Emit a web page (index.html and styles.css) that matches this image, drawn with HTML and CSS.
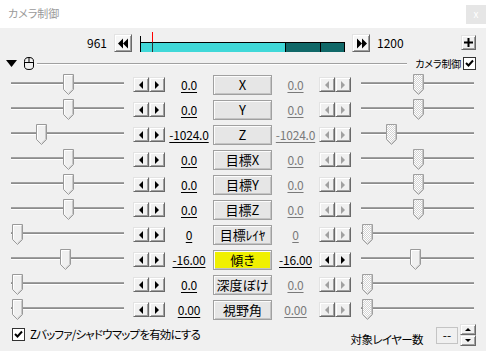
FILE: index.html
```html
<!DOCTYPE html>
<html>
<head>
    <title>カメラ制御</title>
    <meta charset="utf-8">
    <link rel="stylesheet" href="styles.css">
</head>
<body>
    <svg class="defs" width="0" height="0">
        <defs>
            <pattern id="dither" width="2" height="2" patternUnits="userSpaceOnUse">
                <rect width="2" height="2" fill="#fff"/>
                <rect width="1" height="1" fill="#d4d4d4"/>
                <rect x="1" y="1" width="1" height="1" fill="#d4d4d4"/>
            </pattern>
            <symbol id="thumb-on" viewBox="0 0 11 21">
                <path d="M0.5 0.5H10.5V15.5L5.5 20.5L0.5 15.5Z" fill="#f0f0f0" stroke="#9a9a9a"/>
                <path d="M1.5 15V1.5H9.5" fill="none" stroke="#fff"/>
                <path d="M9.5 1.5V15.2L5.5 19.2" fill="none" stroke="#c8c8c8"/>
            </symbol>
            <symbol id="thumb-off" viewBox="0 0 11 21">
                <path d="M0.5 0.5H10.5V15.5L5.5 20.5L0.5 15.5Z" fill="url(#dither)" stroke="#a0a0a0"/>
                <path d="M9.5 1.5V15.2L5.5 19.2" fill="none" stroke="#c8c8c8"/>
            </symbol>
        </defs>
    </svg>

    <div class="titlebar">
        <span class="title">カメラ制御</span>
        <span class="close">x</span>
    </div>

    <div class="toolbar">
        <span class="frame">961</span>
        <span class="nav"><svg width="11" height="11" viewBox="0 0 11 11"><path d="M0 5.5L5 0.5V10.5Z M5 5.5L10 0.5V10.5Z" fill="#000"/></svg></span>
        <div class="timeline">
            <div class="tl-bar">
                <div class="tl-done"></div>
                <div class="tl-seg"></div>
                <div class="tl-seg last"></div>
            </div>
            <div class="tl-cursor"></div>
        </div>
        <span class="nav"><svg width="11" height="11" viewBox="0 0 11 11"><path d="M1 0.5L6 5.5L1 10.5Z M6 0.5L11 5.5L6 10.5Z" fill="#000"/></svg></span>
        <span class="frame-end">1200</span>
        <span class="plus"><svg width="9" height="9" viewBox="0 0 9 9"><path d="M3.5 0H5.5V9H3.5Z M0 3.5H9V5.5H0Z" fill="#000"/></svg></span>
    </div>

    <div class="subbar">
        <svg class="fold" width="11" height="7" viewBox="0 0 11 7"><path d="M0 0H11L5.5 7Z" fill="#000"/></svg>
        <svg class="mouse" width="10" height="13" viewBox="0 0 10 13"><path d="M0.5 4.5C0.5 1.5 2 0.5 5 0.5C8 0.5 9.5 1.5 9.5 4.5V9C9.5 11.5 8 12.5 5 12.5C2 12.5 0.5 11.5 0.5 9Z M0.5 5.5H9.5 M5 0.5V5.5" fill="none" stroke="#000"/></svg>
        <div class="rule"></div>
        <span class="sub-label">カメラ制御</span>
        <span class="check"><svg width="11" height="11" viewBox="0 0 11 11"><path d="M2 5L4.5 7.5L9 2.5" fill="none" stroke="#000" stroke-width="2"/></svg></span>
    </div>

    <div class="rows">
        <div class="row">
            <div class="slider"><div class="track"></div><svg class="thumb" style="left:52px" width="11" height="21"><use href="#thumb-on"/></svg></div>
            <div class="spin"><span class="sb"><i class="tri-l"></i></span><span class="sb"><i class="tri-r"></i></span></div>
            <span class="val">0.0</span>
            <button class="param">X</button>
            <span class="val right off">0.0</span>
            <div class="spin off"><span class="sb"><i class="tri-l"></i></span><span class="sb"><i class="tri-r"></i></span></div>
            <div class="slider right"><div class="track"></div><svg class="thumb" style="left:52px" width="11" height="21"><use href="#thumb-off"/></svg></div>
        </div>
        <div class="row">
            <div class="slider"><div class="track"></div><svg class="thumb" style="left:52px" width="11" height="21"><use href="#thumb-on"/></svg></div>
            <div class="spin"><span class="sb"><i class="tri-l"></i></span><span class="sb"><i class="tri-r"></i></span></div>
            <span class="val">0.0</span>
            <button class="param">Y</button>
            <span class="val right off">0.0</span>
            <div class="spin off"><span class="sb"><i class="tri-l"></i></span><span class="sb"><i class="tri-r"></i></span></div>
            <div class="slider right"><div class="track"></div><svg class="thumb" style="left:52px" width="11" height="21"><use href="#thumb-off"/></svg></div>
        </div>
        <div class="row">
            <div class="slider"><div class="track"></div><svg class="thumb" style="left:25px" width="11" height="21"><use href="#thumb-on"/></svg></div>
            <div class="spin"><span class="sb"><i class="tri-l"></i></span><span class="sb"><i class="tri-r"></i></span></div>
            <span class="val">-1024.0</span>
            <button class="param">Z</button>
            <span class="val right off">-1024.0</span>
            <div class="spin off"><span class="sb"><i class="tri-l"></i></span><span class="sb"><i class="tri-r"></i></span></div>
            <div class="slider right"><div class="track"></div><svg class="thumb" style="left:25px" width="11" height="21"><use href="#thumb-off"/></svg></div>
        </div>
        <div class="row">
            <div class="slider"><div class="track"></div><svg class="thumb" style="left:52px" width="11" height="21"><use href="#thumb-on"/></svg></div>
            <div class="spin"><span class="sb"><i class="tri-l"></i></span><span class="sb"><i class="tri-r"></i></span></div>
            <span class="val">0.0</span>
            <button class="param">目標X</button>
            <span class="val right off">0.0</span>
            <div class="spin off"><span class="sb"><i class="tri-l"></i></span><span class="sb"><i class="tri-r"></i></span></div>
            <div class="slider right"><div class="track"></div><svg class="thumb" style="left:52px" width="11" height="21"><use href="#thumb-off"/></svg></div>
        </div>
        <div class="row">
            <div class="slider"><div class="track"></div><svg class="thumb" style="left:52px" width="11" height="21"><use href="#thumb-on"/></svg></div>
            <div class="spin"><span class="sb"><i class="tri-l"></i></span><span class="sb"><i class="tri-r"></i></span></div>
            <span class="val">0.0</span>
            <button class="param">目標Y</button>
            <span class="val right off">0.0</span>
            <div class="spin off"><span class="sb"><i class="tri-l"></i></span><span class="sb"><i class="tri-r"></i></span></div>
            <div class="slider right"><div class="track"></div><svg class="thumb" style="left:52px" width="11" height="21"><use href="#thumb-off"/></svg></div>
        </div>
        <div class="row">
            <div class="slider"><div class="track"></div><svg class="thumb" style="left:52px" width="11" height="21"><use href="#thumb-on"/></svg></div>
            <div class="spin"><span class="sb"><i class="tri-l"></i></span><span class="sb"><i class="tri-r"></i></span></div>
            <span class="val">0.0</span>
            <button class="param">目標Z</button>
            <span class="val right off">0.0</span>
            <div class="spin off"><span class="sb"><i class="tri-l"></i></span><span class="sb"><i class="tri-r"></i></span></div>
            <div class="slider right"><div class="track"></div><svg class="thumb" style="left:52px" width="11" height="21"><use href="#thumb-off"/></svg></div>
        </div>
        <div class="row">
            <div class="slider"><div class="track"></div><svg class="thumb" style="left:1px" width="11" height="21"><use href="#thumb-on"/></svg></div>
            <div class="spin"><span class="sb"><i class="tri-l"></i></span><span class="sb"><i class="tri-r"></i></span></div>
            <span class="val">0</span>
            <button class="param">目標ﾚｲﾔ</button>
            <span class="val right off">0</span>
            <div class="spin off"><span class="sb"><i class="tri-l"></i></span><span class="sb"><i class="tri-r"></i></span></div>
            <div class="slider right"><div class="track"></div><svg class="thumb" style="left:1px" width="11" height="21"><use href="#thumb-off"/></svg></div>
        </div>
        <div class="row">
            <div class="slider"><div class="track"></div><svg class="thumb" style="left:49px" width="11" height="21"><use href="#thumb-on"/></svg></div>
            <div class="spin"><span class="sb"><i class="tri-l"></i></span><span class="sb"><i class="tri-r"></i></span></div>
            <span class="val">-16.00</span>
            <button class="param hot">傾き</button>
            <span class="val right">-16.00</span>
            <div class="spin"><span class="sb"><i class="tri-l"></i></span><span class="sb"><i class="tri-r"></i></span></div>
            <div class="slider right"><div class="track"></div><svg class="thumb" style="left:49px" width="11" height="21"><use href="#thumb-on"/></svg></div>
        </div>
        <div class="row">
            <div class="slider"><div class="track"></div><svg class="thumb" style="left:1px" width="11" height="21"><use href="#thumb-on"/></svg></div>
            <div class="spin"><span class="sb"><i class="tri-l"></i></span><span class="sb"><i class="tri-r"></i></span></div>
            <span class="val">0.0</span>
            <button class="param">深度ぼけ</button>
            <span class="val right off">0.0</span>
            <div class="spin off"><span class="sb"><i class="tri-l"></i></span><span class="sb"><i class="tri-r"></i></span></div>
            <div class="slider right"><div class="track"></div><svg class="thumb" style="left:1px" width="11" height="21"><use href="#thumb-off"/></svg></div>
        </div>
        <div class="row">
            <div class="slider"><div class="track"></div><svg class="thumb" style="left:1px" width="11" height="21"><use href="#thumb-on"/></svg></div>
            <div class="spin"><span class="sb"><i class="tri-l"></i></span><span class="sb"><i class="tri-r"></i></span></div>
            <span class="val">0.00</span>
            <button class="param">視野角</button>
            <span class="val right off">0.00</span>
            <div class="spin off"><span class="sb"><i class="tri-l"></i></span><span class="sb"><i class="tri-r"></i></span></div>
            <div class="slider right"><div class="track"></div><svg class="thumb" style="left:1px" width="11" height="21"><use href="#thumb-off"/></svg></div>
        </div>
    </div>

    <div class="footer">
        <div class="zbuf">
            <span class="check"><svg width="11" height="11" viewBox="0 0 11 11"><path d="M2 5L4.5 7.5L9 2.5" fill="none" stroke="#000" stroke-width="2"/></svg></span>
            <span class="zbuf-label">Zバッファ/シャドウマップを有効にする</span>
        </div>
        <div class="layers">
            <span class="layers-label">対象レイヤー数</span>
            <span class="layers-box">--</span>
            <div class="updown">
                <span class="ud"><i class="tri-u"></i></span>
                <span class="ud"><i class="tri-d"></i></span>
            </div>
        </div>
    </div>
</body>
</html>
```

FILE: styles.css
```css
body {
    margin: 0;
    width: 486px;
    height: 351px;
    overflow: hidden;
    background: #f0f0f0;
    color: #000;
    font-family: "Noto Sans CJK JP", sans-serif;
    font-size: 12px;
    font-feature-settings: "palt";
}
.defs {
    position: absolute;
}
.titlebar {
    height: 28px;
    background: white;
    display: flex;
    align-items: flex-start;
}
.title {
    margin: 6px 0 0 8px;
    font-size: 11px;
    line-height: 14px;
    color: #9a9a9a;
}
.close {
    margin: 5px 0 0 auto;
    width: 20px;
    height: 19px;
    background: #e6e6e6;
    color: #fff;
    font-size: 10px;
    line-height: 18px;
    text-align: center;
}
.toolbar {
    height: 21px;
    padding-top: 6px;
    display: flex;
    align-items: flex-start;
}
.frame {
    width: 107px;
    text-align: right;
    line-height: 18px;
}
.nav, .plus, .sb, .ud {
    box-sizing: border-box;
    display: flex;
    align-items: center;
    justify-content: center;
    background: #f0f0f0;
    border: 1px solid;
    border-color: #e3e3e3 #696969 #696969 #e3e3e3;
    box-shadow: inset 1px 1px #fff, inset -1px -1px #a0a0a0;
}
.nav {
    margin-left: 7px;
    width: 18px;
    height: 18px;
    background: #f6f6f6;
}
.timeline {
    margin: 2px 0 0 8px;
    width: 204px;
    height: 16px;
    border-left: 1px solid #000;
    position: relative;
    display: flex;
    flex-direction: column;
    justify-content: flex-end;
}
.tl-bar {
    height: 9px;
    border-top: 1px solid #000;
    display: flex;
}
.tl-done {
    width: 144px;
    background: #40d8d8;
}
.tl-seg {
    width: 34px;
    border-left: 1px solid #000;
    background: #106868;
}
.tl-seg.last {
    width: 23px;
    border-right: 1px solid #000;
}
.tl-cursor {
    position: absolute;
    left: 11px;
    top: -4px;
    width: 1px;
    height: 20px;
    background: linear-gradient(#f00 10px, #303030 10px);
}
.frame-end {
    margin-left: 7px;
    line-height: 18px;
}
.plus {
    margin: 1px 10px 0 auto;
    width: 15px;
    height: 15px;
}
.subbar {
    height: 17px;
    display: flex;
    align-items: center;
}
.fold {
    margin-left: 6px;
}
.mouse {
    margin-left: 7px;
}
.rule {
    flex: 1;
    margin: 0 8px 0 3px;
    border-top: 1px solid #a0a0a0;
    border-bottom: 1px solid #fff;
}
.sub-label {
    font-size: 10px;
    line-height: 14px;
    letter-spacing: -0.2px;
}
.check {
    box-sizing: border-box;
    width: 13px;
    height: 13px;
    border: 1px solid #333;
    background: white;
    display: flex;
    align-items: center;
    justify-content: center;
}
.subbar .check {
    margin: 0 10px 0 2px;
}
.row {
    height: 25px;
    padding-left: 11px;
    display: flex;
    align-items: center;
}
.slider {
    position: relative;
    width: 113px;
    height: 25px;
}
.slider.right {
    margin-left: 10px;
}
.track {
    margin-top: 10px;
    height: 1px;
    background: #8c8c8c;
    border-top: 1px solid #a0a0a0;
    border-bottom: 1px solid #fff;
}
.thumb {
    position: absolute;
    top: 2px;
}
.spin {
    display: flex;
    margin-left: 9px;
}
.spin + .val {
    width: 48px;
}
.val {
    width: 47px;
    text-align: center;
    line-height: 16px;
    letter-spacing: -0.2px;
    text-decoration: underline;
    text-underline-offset: 2px;
}
.val.right + .spin {
    margin-left: 0;
}
.val.off {
    color: #7a7a7a;
}
.sb {
    width: 16px;
    height: 15px;
}
.tri-l, .tri-r, .tri-u, .tri-d {
    width: 0;
    height: 0;
    border: 4px solid transparent;
}
.tri-l {
    border-left: 0;
    border-right-color: #000;
}
.tri-r {
    border-right: 0;
    border-left-color: #000;
}
.spin.off .tri-l {
    border-right-color: #a0a0a0;
}
.spin.off .tri-r {
    border-left-color: #a0a0a0;
}
.param {
    box-sizing: border-box;
    width: 59px;
    height: 20px;
    margin: 0;
    padding: 0;
    font: inherit;
    font-size: 13px;
    line-height: 17px;
    color: #000;
    background: #e6e6e6;
    border: 1px solid #a0a0a0;
    box-shadow: inset 1px 1px #fcfcfc, inset -1px -1px #c4c4c4;
}
.param.hot {
    background: #f0f000;
}
.footer {
    height: 29px;
    padding-left: 12px;
    display: flex;
    align-items: flex-start;
}
.zbuf {
    margin-top: 5px;
    display: flex;
    align-items: center;
}
.zbuf-label {
    margin-left: 5px;
    font-size: 11.5px;
    letter-spacing: -0.8px;
    line-height: 14px;
}
.layers {
    margin: 2px 10px 0 auto;
    display: flex;
    align-items: flex-start;
}
.layers-label {
    margin-top: 6px;
    font-size: 11.5px;
    letter-spacing: -0.6px;
    line-height: 18px;
}
.layers-box {
    box-sizing: border-box;
    margin: 3px 0 0 13px;
    width: 22px;
    height: 17px;
    border: 1px solid #c4c4c4;
    text-align: center;
    line-height: 14px;
}
.updown {
    margin-left: 2px;
    display: flex;
    flex-direction: column;
}
.ud {
    width: 16px;
    height: 11px;
}
.tri-u, .tri-d {
    border-width: 3px;
}
.tri-u {
    border-top: 0;
    border-bottom-color: #000;
}
.tri-d {
    border-bottom: 0;
    border-top-color: #000;
}
```
